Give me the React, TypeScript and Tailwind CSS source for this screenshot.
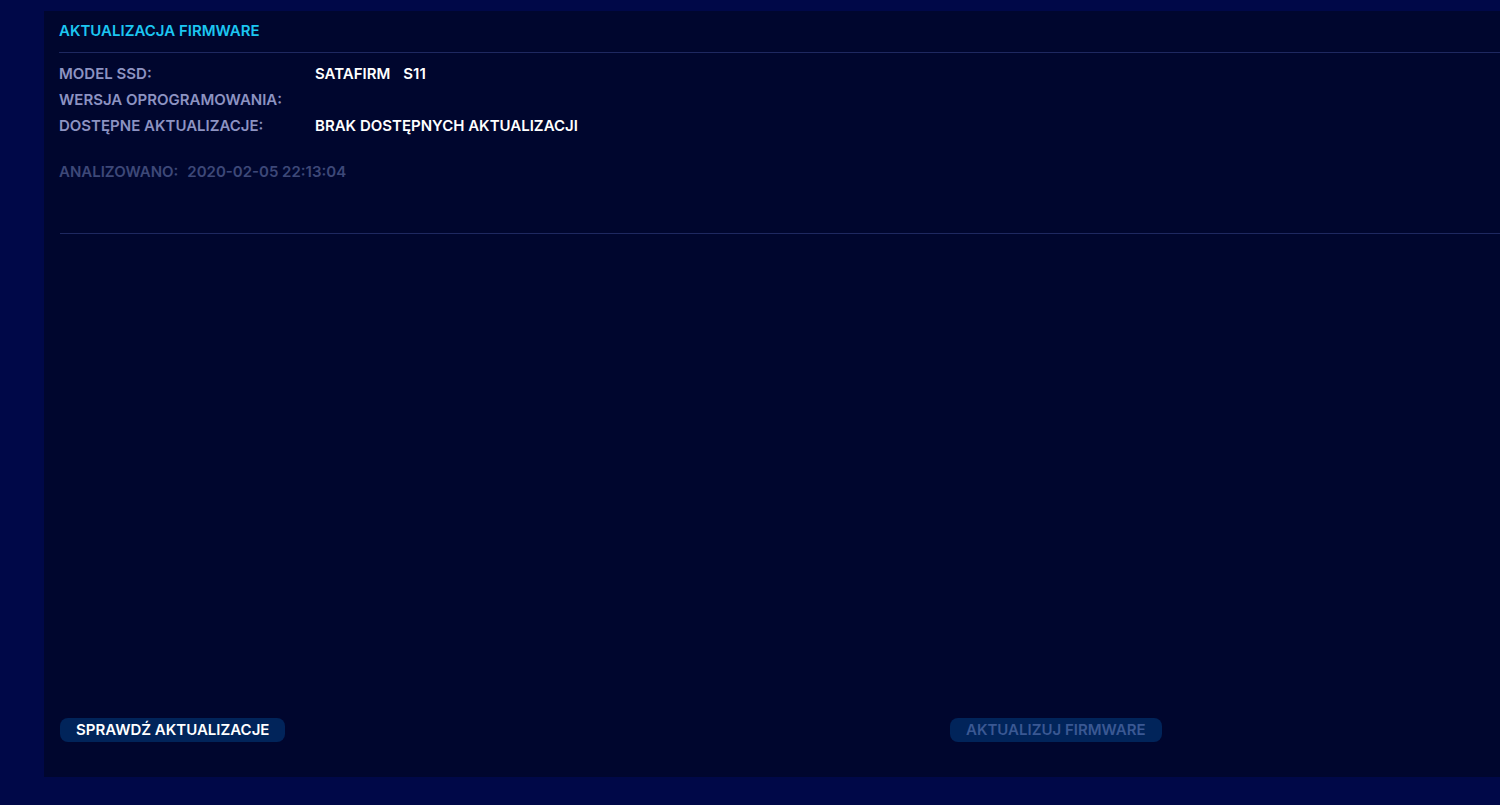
import React from 'react';

const rows: { label: string; value: React.ReactNode }[] = [
  {
    label: 'MODEL SSD:',
    value: (
      <span className="flex gap-[13px]">
        <span>SATAFIRM</span>
        <span>S11</span>
      </span>
    ),
  },
  { label: 'WERSJA OPROGRAMOWANIA:', value: '' },
  { label: 'DOSTĘPNE AKTUALIZACJE:', value: 'BRAK DOSTĘPNYCH AKTUALIZACJI' },
];

const App: React.FC = () => {
  return (
    <div
      className="h-screen w-screen overflow-hidden bg-[#000848] pt-[11px] pl-[44px] pb-[28px]"
      style={{ fontFamily: 'Inter, "Noto Sans", sans-serif' }}
    >
      <div className="flex h-full w-[1812px] flex-col bg-[#00062e] pl-[15px] pr-4 pt-[10px] pb-[35px]">
        {/* Header */}
        <div className="border-b border-[#1e2860] pb-[11px]">
          <h1 className="text-[15px] leading-5 font-semibold text-[#1cc6f2]">AKTUALIZACJA FIRMWARE</h1>
        </div>

        {/* Info */}
        <div className="ml-px border-b border-[#1e2860] pt-[11px] pb-[51px]">
          <div className="-ml-px flex flex-col gap-[6px]">
            {rows.map((r) => (
              <div key={r.label} className="flex text-[15px] leading-5 font-semibold">
                <span className="w-[256px] shrink-0 text-[#8d93c2]">{r.label}</span>
                <span className="text-white">{r.value}</span>
              </div>
            ))}
          </div>
          <div className="-ml-px mt-[26px] flex gap-[9px] text-[15px] leading-5 font-semibold text-[#3d4878]">
            <span>ANALIZOWANO:</span>
            <span>2020-02-05 22:13:04</span>
          </div>
        </div>

        <div className="flex-1" />

        {/* Actions */}
        <div className="ml-px grid grid-cols-2">
          <div>
            <button className="h-6 rounded-lg bg-[#01245a] px-4 text-[15px] leading-6 font-semibold text-white">
              SPRAWDŹ AKTUALIZACJE
            </button>
          </div>
          <div>
            <button
              disabled
              className="h-6 rounded-lg bg-[#01245a] px-4 text-[15px] leading-6 font-semibold text-[#3a5893]"
            >
              AKTUALIZUJ FIRMWARE
            </button>
          </div>
        </div>
      </div>
    </div>
  );
};

export default App;
